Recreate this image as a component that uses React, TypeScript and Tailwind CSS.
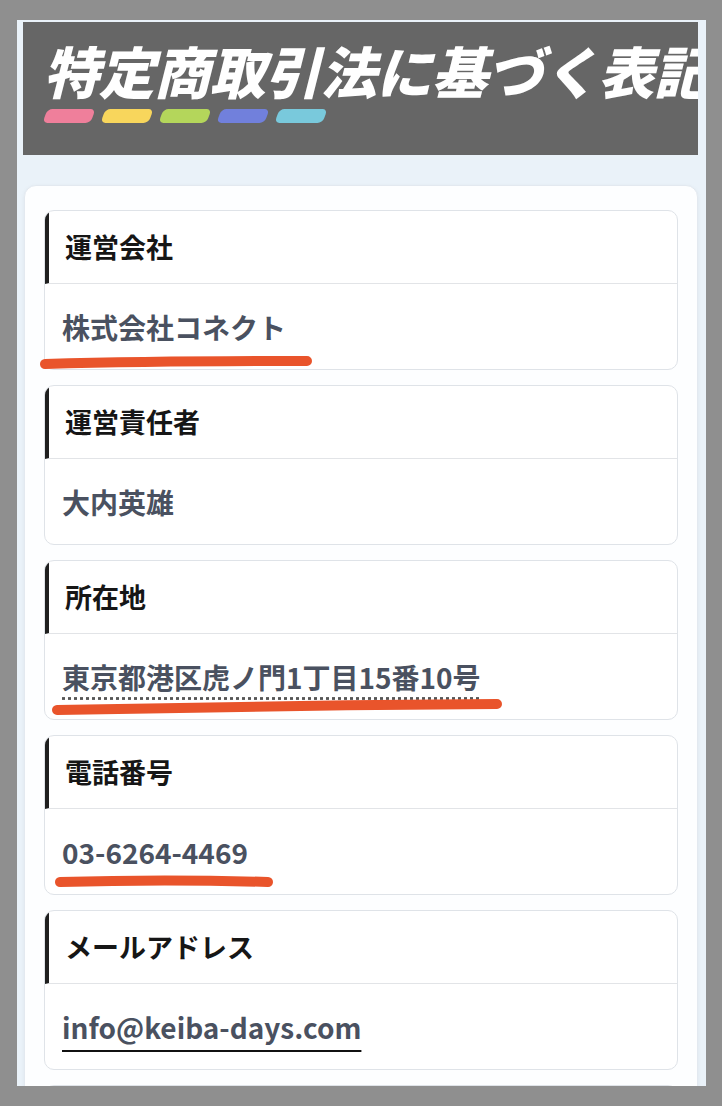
import React from 'react';

const items: { label: string; value: string; kind?: 'dotted' | 'mail' }[] = [
  { label: '運営会社', value: '株式会社コネクト' },
  { label: '運営責任者', value: '大内英雄' },
  { label: '所在地', value: '東京都港区虎ノ門1丁目15番10号', kind: 'dotted' },
  { label: '電話番号', value: '03-6264-4469' },
  { label: 'メールアドレス', value: 'info@keiba-days.com', kind: 'mail' },
];

const pills = ['bg-[#ef7f9b]', 'bg-[#f8d65c]', 'bg-[#b4d65b]', 'bg-[#7180dc]', 'bg-[#79c9dc]'];

export default function App() {
  return (
    <div
      className="relative h-[1106px] w-[722px] overflow-hidden bg-[#8f8f8f] pt-5 pl-[17px] pr-[16px]"
      style={{ fontFamily: '"Noto Sans CJK JP", "Noto Sans", sans-serif' }}
    >
      <div className="h-[1066px] overflow-hidden bg-[#eaf2f9] pl-[6px] pr-[8px] pt-[2px]">
        {/* title banner */}
        <div className="h-[133px] overflow-hidden bg-[#666666] pl-[20px] pt-[20px]">
          <h1 className="whitespace-nowrap text-[56px] font-black italic leading-none tracking-[-0.5px] text-white">
            特定商取引法に基づく表記
          </h1>
          <div className="mt-[11px] flex gap-[10px] pl-[2px]">
            {pills.map((c) => (
              <span key={c} className={`h-[14px] w-[48px] -skew-x-[20deg] rounded-[5px] ${c}`} />
            ))}
          </div>
        </div>

        {/* card */}
        <div className="ml-[1px] mt-[30px] rounded-[12px] border border-[#e3e9f0] bg-[#fdfeff] px-[19px] pt-[24px] shadow-[0_1px_4px_rgba(0,0,0,0.05)]">
          <div className="flex flex-col gap-[15px]">
            {items.map((it) => (
              <div key={it.label} className="overflow-hidden rounded-[10px] border border-[#dfe3e8] bg-white">
                <div className="flex h-[73px] items-center border-b border-[#e2e4e7] border-l-[4px] border-l-[#1f1f1f] pl-[16px] text-[27px] font-bold text-[#161616]">
                  {it.label}
                </div>
                <div className="flex h-[85px] items-center pl-[17px] text-[28px] font-bold text-[#4a5160]">
                  {it.kind === 'mail' ? (
                    <span className="underline decoration-[#111] decoration-2 underline-offset-[11px]">{it.value}</span>
                  ) : it.kind === 'dotted' ? (
                    <span className="underline decoration-dotted decoration-[#555] underline-offset-[9px]">{it.value}</span>
                  ) : (
                    <span>{it.value}</span>
                  )}
                </div>
              </div>
            ))}
            <div className="h-[160px] rounded-[10px] border border-[#dfe3e8] bg-white" />
          </div>
        </div>
      </div>

      {/* hand drawn marker annotations */}
      <svg className="pointer-events-none absolute left-0 top-0" width="722" height="1106" viewBox="0 0 722 1106">
        <g fill="none" stroke="#e9542b" strokeWidth="10" strokeLinecap="round">
          <path d="M45 364 C120 362 220 361 307 361" />
          <path d="M57 710 C180 707 350 705 497 704" />
          <path d="M60 882 C130 880 200 880 268 882" />
        </g>
      </svg>
    </div>
  );
}
